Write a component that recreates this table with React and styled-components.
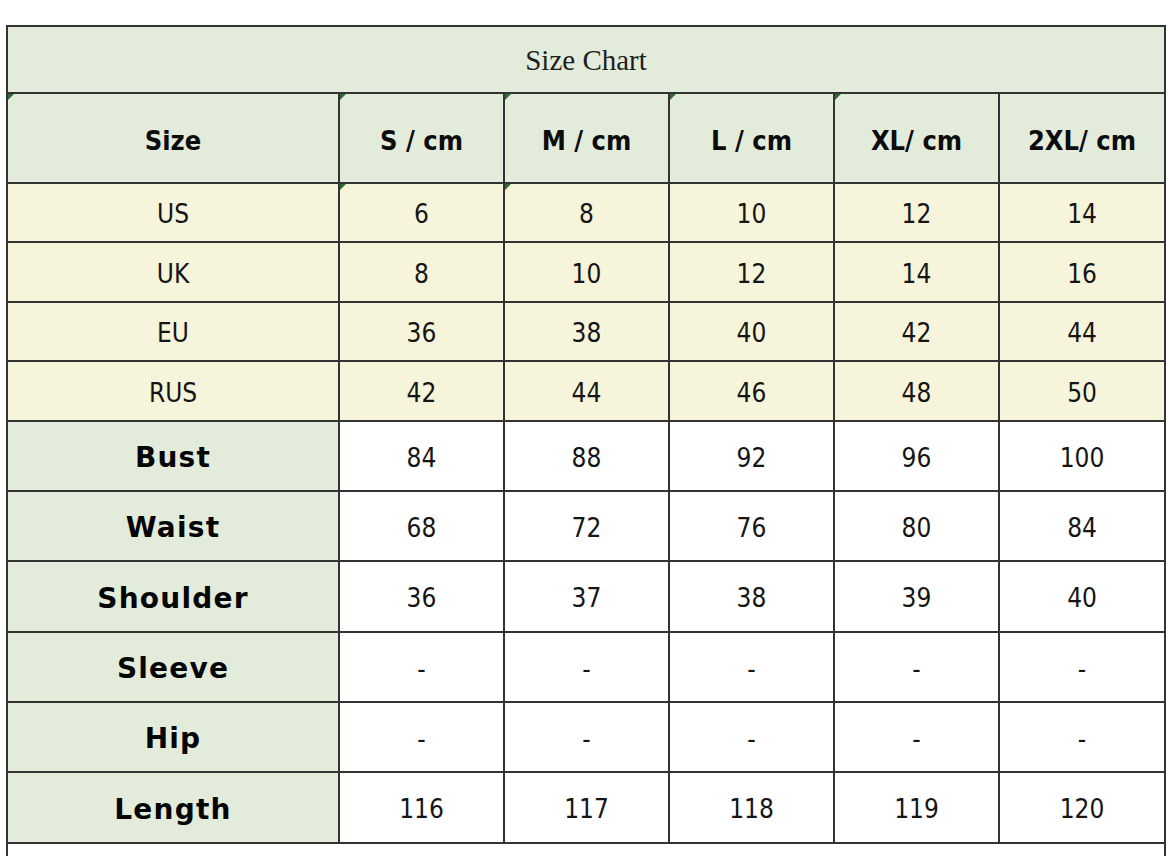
import React from "react";
import styled, { createGlobalStyle } from "styled-components";

const Global = createGlobalStyle`
  html, body { margin: 0; padding: 0; background: #ffffff; }
  body { font-family: "DejaVu Sans Condensed", "DejaVu Sans", sans-serif; color: #111; }
`;

const Page = styled.div`
  width: 1170px;
  height: 856px;
  overflow: hidden;
  padding: 25px 0 0 6px;
  box-sizing: border-box;
  background: #fff;
`;

const Table = styled.table`
  border-collapse: collapse;
  table-layout: fixed;
  width: 1158px;
`;

const Col = styled.col`
  width: ${(p) => p.$w}px;
`;

const Row = styled.tr`
  height: ${(p) => p.$h}px;
`;

const bgFor = (k) =>
  ({ green: "#e3ebdb", yellow: "#f6f4da", white: "#ffffff" }[k] || "#fff");

const Cell = styled.td`
  position: relative;
  border: 2px solid #333333;
  padding: 0;
  text-align: center;
  vertical-align: middle;
  background: ${(p) => bgFor(p.$bg)};
  font-family: "DejaVu Sans Condensed", "DejaVu Sans", sans-serif;
  font-size: 26px;
  color: #151515;
  line-height: 1;
`;

const TitleCell = styled(Cell)`
  font-family: "Liberation Serif", "Times New Roman", serif;
  font-size: 29px;
  color: #1e1e1e;
  padding-top: 2px;
`;

const HeadCell = styled(Cell)`
  font-weight: bold;
  font-size: 27px;
  color: #0c0c0c;
  padding-top: 4px;
`;

const LabelCell = styled(Cell)`
  font-family: "DejaVu Sans", sans-serif;
  font-weight: bold;
  font-size: 28px;
  letter-spacing: 1.2px;
  color: #050505;
  padding-top: 4px;
`;

const ValueCell = styled(Cell)`
  padding-top: 3px;
`;

const OpenCell = styled.td`
  border-left: 2px solid #333333;
  border-right: 2px solid #333333;
  border-top: 2px solid #333333;
  background: #fff;
`;

const Marker = styled.span`
  position: absolute;
  top: 0;
  left: 0;
  width: 0;
  height: 0;
  border-top: 6px solid #2f6b2f;
  border-right: 6px solid transparent;
`;

const widths = [332, 165, 165, 165, 165, 166];
const heads = ["S / cm", "M / cm", "L / cm", "XL/ cm", "2XL/ cm"];
const sizeRows = [
  ["US", "6", "8", "10", "12", "14"],
  ["UK", "8", "10", "12", "14", "16"],
  ["EU", "36", "38", "40", "42", "44"],
  ["RUS", "42", "44", "46", "48", "50"],
];
const sizeHeights = [59, 60, 59, 60];
const measureRows = [
  ["Bust", "84", "88", "92", "96", "100"],
  ["Waist", "68", "72", "76", "80", "84"],
  ["Shoulder", "36", "37", "38", "39", "40"],
  ["Sleeve", "-", "-", "-", "-", "-"],
  ["Hip", "-", "-", "-", "-", "-"],
  ["Length", "116", "117", "118", "119", "120"],
];
const measureHeights = [70, 70, 71, 70, 70, 71];

export default function App() {
  return (
    <>
      <Global />
      <Page>
        <Table>
          <colgroup>
            {widths.map((w, i) => (
              <Col key={i} $w={w} />
            ))}
          </colgroup>
          <tbody>
            <Row $h={67}>
              <TitleCell colSpan={6} $bg="green">
                Size Chart
              </TitleCell>
            </Row>
            <Row $h={90}>
              <HeadCell $bg="green">
                <Marker />
                Size
              </HeadCell>
              {heads.map((h, i) => (
                <HeadCell key={h} $bg="green">
                  {i < 4 && <Marker />}
                  {h}
                </HeadCell>
              ))}
            </Row>
            {sizeRows.map((r, ri) => (
              <Row key={r[0]} $h={sizeHeights[ri]}>
                {r.map((v, ci) => (
                  <ValueCell key={ci} $bg="yellow">
                    {ri === 0 && (ci === 1 || ci === 2) && <Marker />}
                    {v}
                  </ValueCell>
                ))}
              </Row>
            ))}
            {measureRows.map((r, ri) => (
              <Row key={r[0]} $h={measureHeights[ri]}>
                <LabelCell $bg="green">{r[0]}</LabelCell>
                {r.slice(1).map((v, ci) => (
                  <ValueCell key={ci} $bg="white">
                    {v}
                  </ValueCell>
                ))}
              </Row>
            ))}
            <Row $h={40}>
              <OpenCell colSpan={6} />
            </Row>
          </tbody>
        </Table>
      </Page>
    </>
  );
}
